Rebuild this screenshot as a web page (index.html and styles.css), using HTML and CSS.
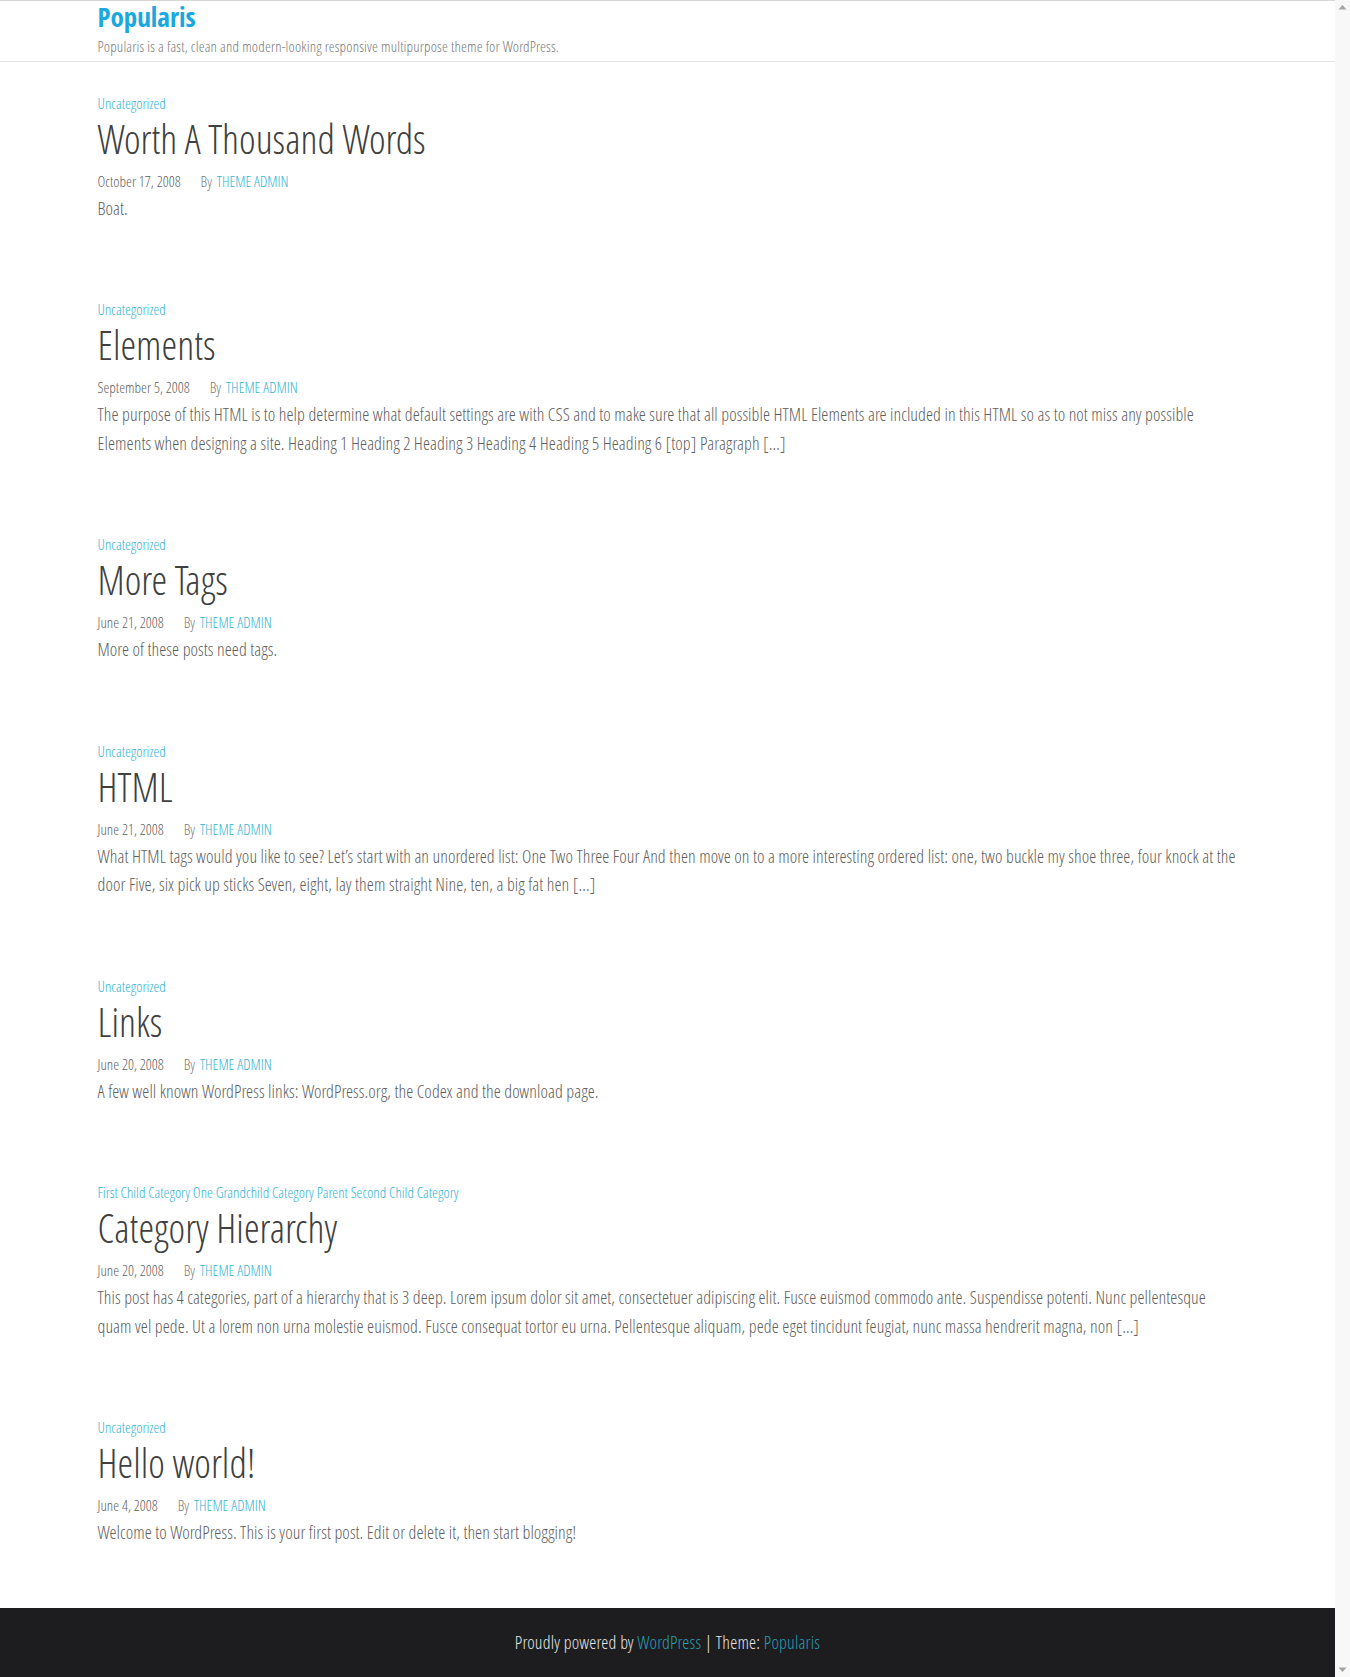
FILE: index.html
```html
<!DOCTYPE html>
<html lang="en">
<head>
<meta charset="utf-8">
<title>Popularis</title>
<link rel="stylesheet" href="styles.css">
</head>
<body>
<div class="page">
<header class="site-header">
  <div class="container">
    <a class="site-title" href="#">Popularis</a>
    <p class="site-desc">Popularis is a fast, clean and modern-looking responsive multipurpose theme for WordPress.</p>
  </div>
</header>

<main class="container posts">
  <article class="post">
    <div class="cats"><a href="#">Uncategorized</a></div>
    <h2 class="post-title"><a href="#">Worth A Thousand Words</a></h2>
    <div class="meta"><span class="date">October 17, 2008</span> <span class="by">By</span> <a href="#">THEME ADMIN</a></div>
    <p class="excerpt">Boat.</p>
  </article>

  <article class="post">
    <div class="cats"><a href="#">Uncategorized</a></div>
    <h2 class="post-title"><a href="#">Elements</a></h2>
    <div class="meta"><span class="date">September 5, 2008</span> <span class="by">By</span> <a href="#">THEME ADMIN</a></div>
    <p class="excerpt">The purpose of this HTML is to help determine what default settings are with CSS and to make sure that all possible HTML Elements are included in this HTML so as to not miss any possible Elements when designing a site. Heading 1 Heading 2 Heading 3 Heading 4 Heading 5 Heading 6 [top] Paragraph […]</p>
  </article>

  <article class="post">
    <div class="cats"><a href="#">Uncategorized</a></div>
    <h2 class="post-title"><a href="#">More Tags</a></h2>
    <div class="meta"><span class="date">June 21, 2008</span> <span class="by">By</span> <a href="#">THEME ADMIN</a></div>
    <p class="excerpt">More of these posts need tags.</p>
  </article>

  <article class="post">
    <div class="cats"><a href="#">Uncategorized</a></div>
    <h2 class="post-title"><a href="#">HTML</a></h2>
    <div class="meta"><span class="date">June 21, 2008</span> <span class="by">By</span> <a href="#">THEME ADMIN</a></div>
    <p class="excerpt">What HTML tags would you like to see? Let’s start with an unordered list: One Two Three Four And then move on to a more interesting ordered list: one, two buckle my shoe three, four knock at the door Five, six pick up sticks Seven, eight, lay them straight Nine, ten, a big fat hen […]</p>
  </article>

  <article class="post">
    <div class="cats"><a href="#">Uncategorized</a></div>
    <h2 class="post-title"><a href="#">Links</a></h2>
    <div class="meta"><span class="date">June 20, 2008</span> <span class="by">By</span> <a href="#">THEME ADMIN</a></div>
    <p class="excerpt">A few well known WordPress links: WordPress.org, the Codex and the download page.</p>
  </article>

  <article class="post">
    <div class="cats"><a href="#">First Child Category</a> <a href="#">One Grandchild Category</a> <a href="#">Parent</a> <a href="#">Second Child Category</a></div>
    <h2 class="post-title"><a href="#">Category Hierarchy</a></h2>
    <div class="meta"><span class="date">June 20, 2008</span> <span class="by">By</span> <a href="#">THEME ADMIN</a></div>
    <p class="excerpt">This post has 4 categories, part of a hierarchy that is 3 deep. Lorem ipsum dolor sit amet, consectetuer adipiscing elit. Fusce euismod commodo ante. Suspendisse potenti. Nunc pellentesque quam vel pede. Ut a lorem non urna molestie euismod. Fusce consequat tortor eu urna. Pellentesque aliquam, pede eget tincidunt feugiat, nunc massa hendrerit magna, non […]</p>
  </article>

  <article class="post">
    <div class="cats"><a href="#">Uncategorized</a></div>
    <h2 class="post-title"><a href="#">Hello world!</a></h2>
    <div class="meta"><span class="date">June 4, 2008</span> <span class="by">By</span> <a href="#">THEME ADMIN</a></div>
    <p class="excerpt">Welcome to WordPress. This is your first post. Edit or delete it, then start blogging!</p>
  </article>
</main>

<footer class="site-footer">
  <p>Proudly powered by <a href="#">WordPress</a> | Theme: <a href="#">Popularis</a></p>
</footer>
</div>

<div class="scrollbar" aria-hidden="true">
  <svg class="sb-arrow" width="15" height="15" viewBox="0 0 15 15"><path d="M3.5 9.5 L7.5 5 L11.5 9.5 Z" fill="#a3a3a3"/></svg>
  <svg class="sb-arrow" width="15" height="15" viewBox="0 0 15 15"><path d="M3.5 5.5 L7.5 10 L11.5 5.5 Z" fill="#a3a3a3"/></svg>
</div>
</body>
</html>
```
FILE: styles.css
```css
html {
  overflow: hidden;
}
body {
  margin: 0;
  background: #fff;
  color: #555;
  font-family: "Open Sans Condensed Light", "Open Sans Condensed", "Open Sans", sans-serif;
  font-weight: 300;
}
.page {
  margin-right: 15px;
}
a {
  text-decoration: none;
  color: #33b4d3;
}
.container {
  max-width: 1170px;
  margin: 0 auto;
  padding: 0 15px;
  box-sizing: border-box;
}
.site-header {
  border-top: 1px solid #d6d6d6;
  border-bottom: 1px solid #e6e6e6;
}
.site-header .container {
  padding-top: 1px;
  padding-bottom: 5px;
}
.site-title {
  display: block;
  font-family: "Open Sans Condensed", "Open Sans", sans-serif;
  font-weight: 700;
  font-size: 27px;
  line-height: 30px;
  letter-spacing: 0;
  color: #1aa8df;
}
.site-desc {
  margin: 4px 0 0;
  font-size: 15px;
  line-height: 20px;
  letter-spacing: 0.15px;
  color: #7a7a7a;
}
.posts {
  display: flex;
  flex-direction: column;
  gap: 76.5px;
  padding-top: 31px;
  padding-bottom: 61px;
}
.post {
  display: flex;
  flex-direction: column;
}
.cats {
  font-size: 15px;
  line-height: 20px;
}
.post-title {
  margin: 4px 0 0;
  font-size: 40px;
  font-weight: 300;
  line-height: 44px;
}
.post-title a {
  color: #404040;
}
.meta {
  margin-top: 10px;
  font-size: 15px;
  line-height: 20px;
  color: #5f5f5f;
}
.meta .date {
  margin-right: 17px;
}
.meta .by {
  margin-right: 2px;
  color: #7a7a7a;
}
.excerpt {
  margin: 3px 0 0;
  font-size: 18px;
  line-height: 28.8px;
  letter-spacing: 0.06px;
  color: #606060;
}
.site-footer {
  background: #1d1d1f;
  padding: 19px 15px 20px;
  text-align: center;
}
.site-footer p {
  margin: 0;
  font-size: 18px;
  line-height: 30px;
  letter-spacing: 0.2px;
  color: #e6e6e6;
}
.site-footer a {
  color: #2a9fb6;
}
.scrollbar {
  position: fixed;
  top: 0;
  right: 0;
  bottom: 0;
  width: 15px;
  background: #f8f8f8;
  display: flex;
  flex-direction: column;
  justify-content: space-between;
}
.sb-arrow {
  display: block;
}
```
